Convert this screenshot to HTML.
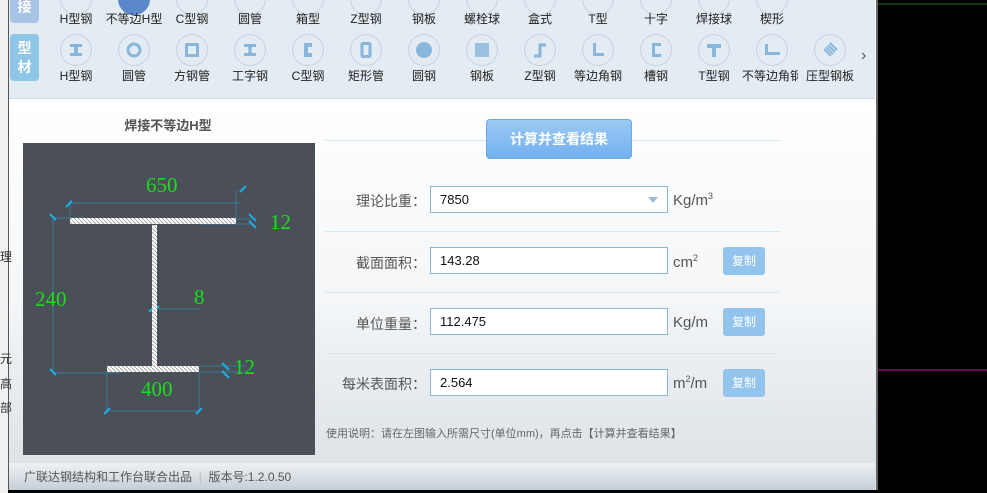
<!DOCTYPE html><html><head><meta charset="utf-8"><style>
body{margin:0;width:987px;height:493px;background:#000;position:relative;overflow:hidden;font-family:"Liberation Sans","Noto Sans CJK SC",sans-serif;}
.a{position:absolute}
.win{left:8px;top:0;width:867px;height:490px;background:linear-gradient(#fff 100px,#f4f6f8 300px,#dde3e7 460px);border-left:1px solid #555;border-right:2px solid #666}
.top{left:9px;top:0;width:866px;height:98px;background:#e3ebf3;border-bottom:1px solid #cfd9e2}
.circ{width:30px;height:30px;border-radius:50%;border:1px solid #c5d3e3;background:#e3ebf3}
.lab{font-size:12px;color:#222;width:60px;text-align:center;white-space:nowrap}
.line{left:325px;width:455px;height:1px;background:#d6e8f5}
.lb{font-size:14px;color:#555;width:110px;text-align:right}
.inp{left:430px;width:236px;height:25px;border:1px solid #8ab6de;background:#fff;font-size:13px;line-height:25px;text-indent:9px;color:#111}
.unit{font-size:15px;color:#555}
.cp{left:723px;width:42px;height:28px;border-radius:3px;background:#92c4ee;color:#fff;font-size:12px;line-height:28px;text-align:center}
</style></head><body>
<div class="a" style="left:0;top:0;width:8px;height:493px;background:#f0f0f0"></div>
<div class="a" style="left:876px;top:3px;width:111px;height:2px;background:#0a3a0a"></div>
<div class="a" style="left:876px;top:369px;width:111px;height:2px;background:#6a0a4a"></div>
<div class="a win"></div>
<div class="a top"></div>
<div class="a" style="left:10px;top:0;width:29px;height:23px;background:#a9c3e6;border-radius:0 0 4px 4px;color:#fff;font-size:14px;text-align:center;line-height:14px;font-weight:bold">接</div>
<div class="a" style="left:10px;top:34px;width:29px;height:47px;background:#8fc5e6;border-radius:4px;color:#fff;font-size:14px;text-align:center;line-height:19px;padding-top:5px;box-sizing:border-box;font-weight:bold">型<br>材</div>
<div id="icons"></div>
<div class="a" style="left:861px;top:47px;font-size:16px;color:#555">›</div>
<div class="a" style="left:88px;top:115px;width:160px;text-align:center;font-size:13px;font-weight:bold;color:#555">焊接不等边H型</div>
<svg class="a" style="left:23px;top:143px" width="292" height="312" viewBox="23 143 292 312">
<defs><pattern id="h" width="4" height="4" patternUnits="userSpaceOnUse"><rect width="4" height="4" fill="#fff"/><path d="M0 0L4 4" stroke="#999" stroke-width="0.8"/></pattern></defs>
<rect x="23" y="143" width="292" height="312" fill="#4a4f58"/>
<g stroke="#3a7a96" stroke-width="1" fill="none">
<path d="M70 203H240M70 218V200M236 218V190M53 218V373M53 218H85M53 373H120M199 219H253M199 224H253M199 366H246M199 372H246M107 373V413M199 373V413M107 411H200M153 309H200"/></g>
<g stroke="#1ab0e8" stroke-width="2"><path d="M66 207L72 201M240 192L246 186M50 214L56 220M50 369L56 375M249 214L256 221M249 221L256 228M222 363L229 370M222 371L229 378M104 414L110 408M196 414L202 408M149 312L155 306M153 312L159 306"/></g>
<rect x="70" y="218" width="166" height="6" fill="url(#h)"/>
<rect x="152" y="225" width="5" height="141" fill="url(#h)"/>
<rect x="107" y="366" width="92" height="6" fill="url(#h)"/>
<g fill="#1adf1a" font-family="Liberation Serif,serif" font-size="21">
<text x="146" y="192">650</text><text x="270" y="229">12</text><text x="35" y="306">240</text><text x="194" y="304">8</text><text x="234" y="374">12</text><text x="141" y="396">400</text></g>
</svg>
<div class="a line" style="top:140px"></div>
<div class="a" style="left:486px;top:119px;width:144px;height:38px;border:1px solid #6aa8e8;border-radius:4px;background:linear-gradient(#9bcaf3,#72b0f0);color:#fff;font-size:14px;font-weight:bold;text-align:center;line-height:38px">计算并查看结果</div>
<div class="a lb" style="left:316px;top:191px">理论比重：</div>
<div class="a inp" style="top:186px">7850</div>
<div class="a" style="left:648px;top:197px;width:0;height:0;border:5px solid transparent;border-top:6px solid #9bbbd8"></div>
<div class="a unit" style="left:673px;top:191px">Kg/m<sup style="font-size:9px">3</sup></div>
<div class="a line" style="top:231px"></div>
<div class="a lb" style="left:316px;top:253px">截面面积：</div>
<div class="a inp" style="top:247px">143.28</div>
<div class="a unit" style="left:673px;top:253px">cm<sup style="font-size:9px">2</sup></div>
<div class="a cp" style="top:247px">复制</div>
<div class="a line" style="top:292px"></div>
<div class="a lb" style="left:316px;top:314px">单位重量：</div>
<div class="a inp" style="top:308px">112.475</div>
<div class="a unit" style="left:673px;top:314px">Kg/m</div>
<div class="a cp" style="top:308px">复制</div>
<div class="a line" style="top:353px"></div>
<div class="a lb" style="left:316px;top:374px">每米表面积：</div>
<div class="a inp" style="top:369px">2.564</div>
<div class="a unit" style="left:673px;top:374px">m<sup style="font-size:9px">2</sup>/m</div>
<div class="a cp" style="top:369px">复制</div>
<div class="a line" style="top:413px"></div>
<div class="a" style="left:326px;top:425px;font-size:11px;color:#666">使用说明：请在左图输入所需尺寸(单位mm)，再点击【计算并查看结果】</div>
<div class="a" style="left:9px;top:463px;width:866px;height:27px;background:linear-gradient(#eef1f3,#c5cfd6)"></div>
<div class="a" style="left:24px;top:468px;font-size:12px;color:#555">广联达钢结构和工作台联合出品 &nbsp;<span style="color:#bbb">|</span>&nbsp; 版本号:1.2.0.50</div>
<div class="a" style="left:0;top:248px;font-size:12px;color:#333">理</div>
<div class="a" style="left:0;top:350px;font-size:12px;color:#333">元</div>
<div class="a" style="left:0;top:375px;font-size:12px;color:#333">高</div>
<div class="a" style="left:0;top:399px;font-size:12px;color:#333">部</div>
<script>
var r1=["H型钢","不等边H型","C型钢","圆管","箱型","Z型钢","钢板","螺栓球","盒式","T型","十字","焊接球","楔形"];
var r2=["H型钢","圆管","方钢管","工字钢","C型钢","矩形管","圆钢","钢板","Z型钢","等边角钢","槽钢","T型钢","不等边角钢","压型钢板"];
var c='#88b6dc';
var ic=[
'<path d="M9 9H21V12H17V18H21V21H9V18H13V12H9Z" fill="'+c+'"/>',
'<circle cx="15" cy="15" r="6" fill="none" stroke="'+c+'" stroke-width="3"/>',
'<rect x="9.5" y="9.5" width="11" height="11" fill="none" stroke="'+c+'" stroke-width="3"/>',
'<path d="M9 9H21V12H17Q16 15 17 18H21V21H9V18H13Q14 15 13 12H9Z" fill="'+c+'"/>',
'<path d="M11 8H19V12H15V18H19V22H11Z" fill="'+c+'"/>',
'<rect x="11" y="8.5" width="8" height="13" rx="1" fill="none" stroke="'+c+'" stroke-width="3"/>',
'<circle cx="15" cy="15" r="8" fill="'+c+'"/>',
'<rect x="8" y="8" width="14" height="14" fill="'+c+'" opacity="0.8"/>',
'<path d="M9 21H15V10H21" fill="none" stroke="'+c+'" stroke-width="3"/>',
'<path d="M10 8H13V18H21V21H10Z" fill="'+c+'"/>',
'<path d="M11 8H20V11H14V19H20V22H11Z" fill="'+c+'"/>',
'<path d="M8 9H22V13H17V22H13V13H8Z" fill="'+c+'"/>',
'<path d="M8 9H11V17H23V20H8Z" fill="'+c+'"/>',
'<path d="M9 14L16 21M11 12L18 19M13 10L20 17M15 8L22 15" stroke="'+c+'" stroke-width="2"/>'];
var h="";
r1.forEach(function(t,i){var cx=76+58*i;h+='<div class="a circ" style="left:'+(cx-16)+'px;top:-17px;'+(i==1?'background:#5a88c8;border-color:#5a88c8':'')+'"></div><div class="a lab" style="left:'+(cx-30)+'px;top:10px">'+t+'</div>';});
r2.forEach(function(t,i){var cx=76+58*i;h+='<div class="a circ" style="left:'+(cx-16)+'px;top:34px"><svg width="30" height="30" style="display:block">'+ic[i]+'</svg></div><div class="a lab" style="left:'+(cx-30)+'px;top:67px;overflow:hidden;width:'+(i==12?56:60)+'px">'+t+'</div>';});
document.getElementById("icons").innerHTML=h;
</script>
</body></html>
